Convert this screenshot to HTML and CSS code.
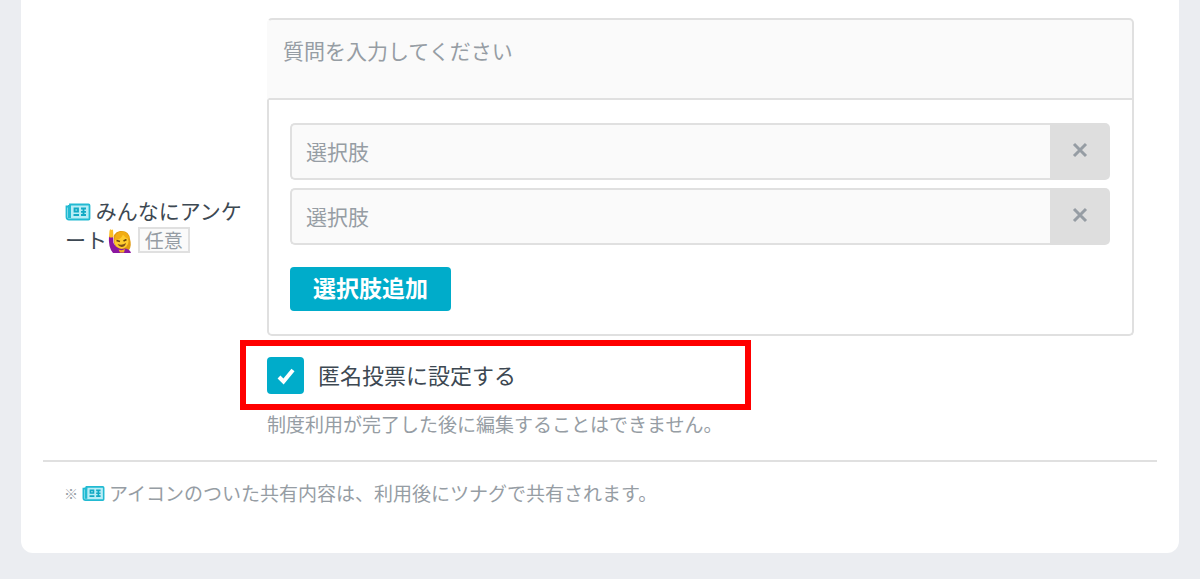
FILE: index.html
```html
<!DOCTYPE html>
<html lang="ja">
<head>
<meta charset="utf-8">
<meta name="viewport" content="width=device-width, initial-scale=1">
<title>みんなにアンケート</title>
<link rel="stylesheet" href="styles.css">
</head>
<body>
<svg class="sprite" aria-hidden="true">
  <symbol id="news" viewBox="0 0 26 18">
    <path d="M5 1.500H23.500Q24.500 1.500 24.500 2.500V15.500Q24.500 16.500 23.500 16.500H4Q1.500 16.500 1.500 14V3.500H5Z" fill="#b9edf6" stroke="#22bad2" stroke-width="1.800"/>
    <path d="M4.500 2V15" stroke="#22bad2" stroke-width="3"/>
    <path d="M9.500 5.500H13V8.500H9.500ZM8.500 12H14M16 5.500H21M16 8.800H21M16 12H21M18.500 5V12" fill="none" stroke="#12a9c4" stroke-width="1.800"/>
  </symbol>
</svg>
<main class="card">
  <form class="field">
    <div class="field-name">
      <label for="question"><svg class="news" aria-hidden="true"><use href="#news"/></svg> みんなにアンケート</label><svg class="emoji" viewBox="0 0 24 26" role="img" aria-label="手を挙げる人">
        <path d="M6 15Q4 4 12 3Q21 2 22 11Q24 18 21 22Q15 24 8 20Z" fill="#e09a10"/>
        <path d="M1 8Q0 19 5 25H23Q22 21 17 20.500Q9 22 5.500 15L5 8Z" fill="#8b169f"/>
        <path d="M1 9L1.500 3Q2 0 3.500 2L5 1.500L5.500 9Q3 10 1 9Z" fill="#fbbd22"/>
        <ellipse cx="13.500" cy="13.500" rx="7" ry="7.200" fill="#ffcb2e"/>
        <path d="M6.500 12Q13 12 15 6.500Q17 10 21.500 11Q20 3.500 14 3.500Q7 4 6.500 12Z" fill="#f2ad12"/>
        <path d="M8.500 12.500L12 13.500M15.500 13L18.500 11.500" stroke="#68430d" stroke-width="1.600"/>
        <path d="M9.500 16Q14 18 18 15Q17 19 13.500 19Q11 19 9.500 16Z" fill="#805018"/>
        <path d="M10.500 21.500Q14 23 17 21L16 24.500H12Z" fill="#f0b322"/>
      </svg>
      <span class="badge">任意</span>
    </div>
    <div class="field-body">
      <textarea class="question" id="question" placeholder="質問を入力してください"></textarea>
      <div class="choices">
        <div class="choice">
          <input class="choice-text" type="text" placeholder="選択肢" aria-label="選択肢 1">
          <button class="remove" type="button" aria-label="選択肢 1 を削除"><svg class="cross" viewBox="0 0 16 16"><path d="M2 2L14 14M14 2L2 14"/></svg></button>
        </div>
        <div class="choice">
          <input class="choice-text" type="text" placeholder="選択肢" aria-label="選択肢 2">
          <button class="remove" type="button" aria-label="選択肢 2 を削除"><svg class="cross" viewBox="0 0 16 16"><path d="M2 2L14 14M14 2L2 14"/></svg></button>
        </div>
        <button class="add" type="button">選択肢追加</button>
      </div>
      <div class="anonymous">
        <span class="tick">
          <input class="tick-box" type="checkbox" id="anonymous" checked>
          <svg class="tick-mark" viewBox="0 0 18 18" aria-hidden="true"><path d="M2 10L6.500 14.500L16 3"/></svg>
        </span>
        <label for="anonymous">匿名投票に設定する</label>
      </div>
      <p class="help">制度利用が完了した後に編集することはできません。</p>
    </div>
  </form>
  <p class="note"><span class="mark">※</span><svg class="news news-small" aria-hidden="true"><use href="#news"/></svg><span>アイコンのついた共有内容は、利用後にツナグで共有されます。</span></p>
</main>
</body>
</html>
```
FILE: styles.css
```css
*,
::before {
  box-sizing: border-box;
}

body {
  margin: 0;
  background: #ebedf1;
  color: #3d4852;
  font-family: "Noto Sans CJK JP", sans-serif;
  font-size: 21px;
}

input,
textarea,
button {
  margin: 0;
  font: inherit;
}

.sprite {
  display: none;
}

.card {
  margin: 0 21px 26px;
  padding: 18px 22px 46px;
  border-radius: 0 0 12px 12px;
  background: #fff;
}

.field {
  display: grid;
  grid-template-columns: 180px minmax(0, 1fr);
  column-gap: 22px;
  align-items: center;
  padding: 0 23px 22px 22px;
  border-bottom: 2px solid #e0e0e0;
}

.field-name {
  padding-bottom: 6px;
  line-height: 29px;
}

.news {
  width: 26px;
  height: 18px;
  vertical-align: -2px;
}

.emoji {
  width: 24px;
  height: 26px;
  margin: 0 1px;
  vertical-align: -6px;
}

.badge {
  display: inline-block;
  padding: 0 5px;
  border: 2px solid #e0e0e0;
  background: #fafafa;
  color: #969da4;
  font-size: 19px;
  line-height: 22px;
}

.question {
  display: block;
  width: 100%;
  height: 82px;
  padding: 16px 14px;
  border: 2px solid #e0e0e0;
  border-left-color: #fafafa;
  border-radius: 5px 5px 0 0;
  background: #fafafa;
  line-height: 28px;
  resize: none;
}

::placeholder {
  color: #969da4;
  opacity: 1;
}

.choices {
  display: grid;
  row-gap: 8px;
  padding: 23px 22px 23px 21px;
  border: 2px solid #e0e0e0;
  border-top: 0;
  border-radius: 0 0 5px 5px;
}

.choice {
  display: flex;
  height: 57px;
}

.choice-text {
  flex: 1;
  min-width: 0;
  padding: 0 14px 2px;
  border: 2px solid #e0e0e0;
  border-right: 0;
  border-radius: 5px 0 0 5px;
  background: #fafafa;
}

.remove {
  display: grid;
  place-items: center;
  width: 60px;
  padding: 0 0 3px;
  border: 0;
  border-radius: 0 5px 5px 0;
  background: #dedede;
}

.cross {
  width: 16px;
  height: 16px;
  fill: none;
  stroke: #969da4;
  stroke-width: 3;
}

.add {
  justify-self: start;
  height: 44px;
  margin-top: 14px;
  padding: 0 23px 4px;
  border: 0;
  border-radius: 4px;
  background: #00acca;
  color: #fff;
  font-size: 23px;
  font-weight: 700;
  line-height: 40px;
}

.anonymous {
  position: relative;
  display: flex;
  align-items: center;
  gap: 14px;
  margin-top: 21px;
  font-size: 22px;
  line-height: 35px;
}

.anonymous label {
  padding-bottom: 2px;
}

.anonymous::before {
  content: "";
  position: absolute;
  top: -17px;
  left: -27px;
  width: 511px;
  height: 70px;
  border: 6px solid #f00;
  pointer-events: none;
}

.tick {
  display: grid;
  place-items: center;
}

.tick > * {
  grid-area: 1 / 1;
}

.tick-box {
  width: 37px;
  height: 37px;
  appearance: none;
  border-radius: 4px;
}

.tick-box:checked {
  background: #00acca;
}

.tick-mark {
  width: 18px;
  height: 18px;
  fill: none;
  stroke: #fff;
  stroke-width: 4;
  pointer-events: none;
}

.tick-box:not(:checked) + .tick-mark {
  visibility: hidden;
}

.help {
  margin: 16px 0 0;
  color: #969da4;
  font-size: 19px;
  line-height: 28px;
}

.note {
  display: flex;
  align-items: center;
  gap: 4px;
  margin: 17px 21px 0;
  color: #969da4;
  font-size: 19px;
  line-height: 28px;
}

.mark {
  font-size: 14px;
  font-weight: 700;
}

.news-small {
  width: 23px;
  height: 17px;
}
```
